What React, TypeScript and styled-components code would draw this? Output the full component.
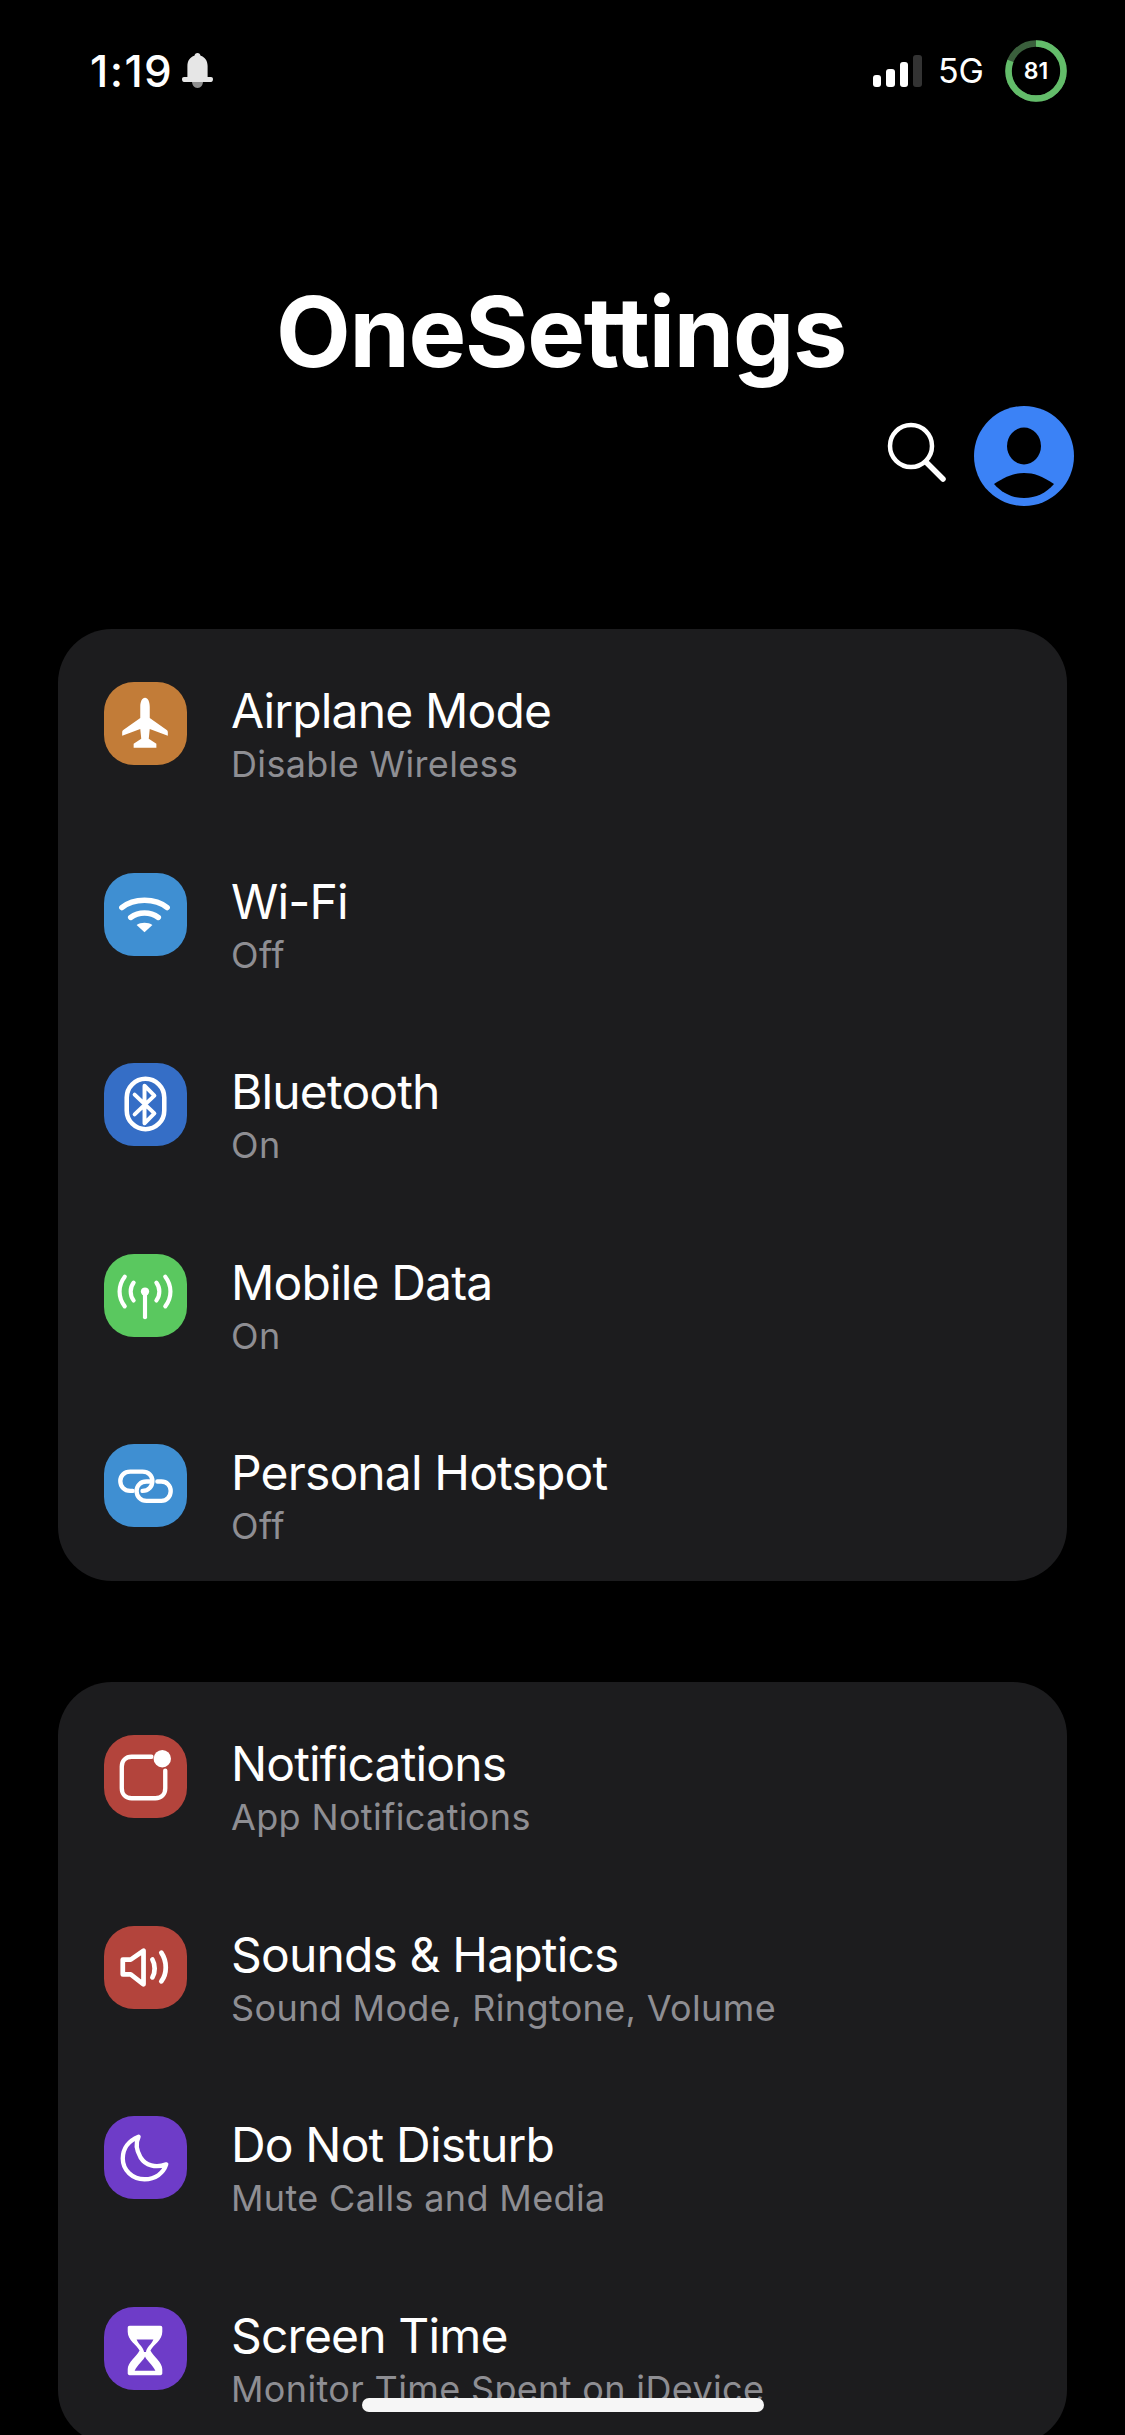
import { ReactNode } from 'react';
import styled, { createGlobalStyle } from 'styled-components';

const GlobalStyle = createGlobalStyle`
    html, body {
        margin: 0;
        padding: 0;
        background: #000;
        overflow: hidden;
    }
    * {
        box-sizing: border-box;
    }
`

type Item = {
    title: string;
    sub: string;
    color: string;
    icon: ReactNode;
}

const stroke = { fill: 'none', stroke: '#fff', strokeLinecap: 'round', strokeLinejoin: 'round' } as const;

const AirplaneIcon = () => (
    <svg viewBox="0 0 84 84">
        <path fill="#fff" d="M41.5 16C44.5 16 46.3 20 46.3 25V36.5L63.5 48.5C64.3 49.2 64.6 50 64.6 51V54.5L46.3 47.5L45.3 57.5L53 62.5V66.5H30V62.5L37.7 57.5L36.7 47.5L18.4 54.5V51C18.4 50 18.7 49.2 19.5 48.5L36.7 36.5V25C36.7 20 38.5 16 41.5 16Z" />
    </svg>
)

const WifiIcon = () => (
    <svg viewBox="0 0 84 84">
        <path {...stroke} strokeWidth="5.5" d="M18 35C30 25 52 25 64 35" />
        <path {...stroke} strokeWidth="5.5" d="M27 45C35 39 47 39 55 45" />
        <path fill="#fff" d="M33 52.5C37 49.5 45 49.5 49 52.5L41 60Z" />
    </svg>
)

const BluetoothIcon = () => (
    <svg viewBox="0 0 84 84">
        <rect {...stroke} strokeWidth="4.6" x="23" y="16" width="38" height="51" rx="19" />
        <path {...stroke} strokeWidth="4" d="M31 32L51 51L41 61V23L51 33L31 52" />
    </svg>
)

const AntennaIcon = () => (
    <svg viewBox="0 0 84 84">
        <circle fill="#fff" cx="41.5" cy="38" r="4.2" />
        <path {...stroke} strokeWidth="4.2" d="M41.5 38V64" />
        <path {...stroke} strokeWidth="4.2" d="M30 29C26 34 26 42 30 47" />
        <path {...stroke} strokeWidth="4.2" d="M53 29C57 34 57 42 53 47" />
        <path {...stroke} strokeWidth="4.2" d="M21 23C14 32 14 44 21 53" />
        <path {...stroke} strokeWidth="4.2" d="M62 23C69 32 69 44 62 53" />
    </svg>
)

const LinkIcon = () => (
    <svg viewBox="0 0 84 84">
        <path {...stroke} strokeWidth="4.4" d="M29 47.5H26.5C20.5 47.5 16.5 43 16.5 37.5C16.5 32 20.5 28 26.5 28H39C45 28 49 32 49 37.5C49 43 45 47.5 39 47.5" />
        <path {...stroke} strokeWidth="4.4" d="M54 38H58C63.5 38 67.5 42 67.5 47.5C67.5 53 63.5 57.5 58 57.5H43C37 57.5 33 53 33 47.5C33 42 37 38 43 38H46" />
    </svg>
)

const BadgeIcon = () => (
    <svg viewBox="0 0 84 84">
        <path {...stroke} strokeWidth="4.4" d="M48 22H28C22 22 18 26 18 32V54C18 60 22 64 28 64H52C58 64 62 60 62 54V36" />
        <circle fill="#fff" cx="59" cy="24" r="8.8" />
    </svg>
)

const SpeakerIcon = () => (
    <svg viewBox="0 0 84 84">
        <path {...stroke} strokeWidth="4.8" d="M19 34H27L40 25V59L27 49H19Z" />
        <path {...stroke} strokeWidth="4.8" d="M49 34C52 39 52 47 49 52" />
        <path {...stroke} strokeWidth="4.8" d="M58 27C64 36 64 48 58 56" />
    </svg>
)

const MoonIcon = () => (
    <svg viewBox="0 0 84 84">
        <path {...stroke} strokeWidth="4.4" d="M35 21C25 25 19 33 19 43C19 55 29 64 41 64C52 64 60 58 63 49C52 53 42 50 37 42C33 35 32 27 35 21Z" />
    </svg>
)

const HourglassIcon = () => (
    <svg viewBox="0 0 84 84">
        <path fill="#fff" fillRule="evenodd" d="M26 19H57C58.5 19 59 20 59 21V25C59 34 50 38 47 44C50 50 59 56 59 63V67C59 68 58.5 69 57 69H26C24.5 69 24 68 24 67V63C24 56 33 50 36 44C33 38 24 34 24 25V21C24 20 24.5 19 26 19ZM33 33C35 38 40 41 40.5 45.5H42.5C43 41 48 38 50 33ZM41.5 50C40 54 34 58 31 64.5H52C49 58 43 54 41.5 50Z" />
    </svg>
)

const primary: Item[] = [
    { title: 'Airplane Mode', sub: 'Disable Wireless', color: '#c27c38', icon: <AirplaneIcon /> },
    { title: 'Wi-Fi', sub: 'Off', color: '#3f8fd2', icon: <WifiIcon /> },
    { title: 'Bluetooth', sub: 'On', color: '#356ec6', icon: <BluetoothIcon /> },
    { title: 'Mobile Data', sub: 'On', color: '#5ac85f', icon: <AntennaIcon /> },
    { title: 'Personal Hotspot', sub: 'Off', color: '#3f8fd2', icon: <LinkIcon /> },
];

const secondary: Item[] = [
    { title: 'Notifications', sub: 'App Notifications', color: '#b3443c', icon: <BadgeIcon /> },
    { title: 'Sounds & Haptics', sub: 'Sound Mode, Ringtone, Volume', color: '#b3443c', icon: <SpeakerIcon /> },
    { title: 'Do Not Disturb', sub: 'Mute Calls and Media', color: '#6e3cc8', icon: <MoonIcon /> },
    { title: 'Screen Time', sub: 'Monitor Time Spent on iDevice', color: '#6e3cc8', icon: <HourglassIcon /> },
];

const Group = ({ items }: { items: Item[] }) => (
    <Card>
        {items.map((item) => (
            <Row key={item.title}>
                <IconTile $color={item.color}>{item.icon}</IconTile>
                <div>
                    <RowTitle>{item.title}</RowTitle>
                    <RowSub>{item.sub}</RowSub>
                </div>
            </Row>
        ))}
    </Card>
)

const App = () => {
    return (
        <Wrapper>
            <GlobalStyle />
            <StatusBar>
                <TimeGroup>
                    <Time>1:19</Time>
                    <svg width="31" height="35" viewBox="0 0 31 35">
                        <path fill="#8f8f8f" d="M10 28H21C21 32 19 35 15.5 35C12 35 10 32 10 28Z" />
                        <path fill="#e6e6e6" d="M15.5 0C17.2 0 18.3 1.2 18.6 2.8C23 4 25.6 8 25.6 13V24H29C30.2 24 31 24.8 31 26.2C31 27.6 30.2 29 29 29H2C0.8 29 0 27.6 0 26.2C0 24.8 0.8 24 2 24H5.4V13C5.4 8 8 4 12.4 2.8C12.7 1.2 13.8 0 15.5 0Z" />
                    </svg>
                </TimeGroup>
                <StatusRight>
                    <Signal>
                        <SignalBar $height={12} />
                        <SignalBar $height={18} />
                        <SignalBar $height={25} />
                        <SignalBar $height={32} $off />
                    </Signal>
                    <Network>5G</Network>
                    <Battery>
                        <svg width="62" height="62" viewBox="0 0 62 62">
                            <circle cx="31" cy="31" r="27.5" fill="none" stroke="#3a5f3c" strokeWidth="6.5" />
                            <circle cx="31" cy="31" r="27.5" fill="none" stroke="#63bc6a" strokeWidth="6.5" pathLength="100" strokeDasharray="81 19" transform="rotate(-90 31 31)" />
                        </svg>
                        <BatteryLevel>81</BatteryLevel>
                    </Battery>
                </StatusRight>
            </StatusBar>
            <Title>OneSettings</Title>
            <Actions>
                <SearchButton>
                    <svg width="60" height="60" viewBox="0 0 60 60">
                        <circle {...stroke} strokeWidth="4.5" cx="24" cy="24" r="21" />
                        <path {...stroke} strokeWidth="5.5" d="M39 40L56 57" />
                    </svg>
                </SearchButton>
                <svg width="100" height="100" viewBox="0 0 100 100">
                    <circle cx="50" cy="50" r="50" fill="#3b82f6" />
                    <ellipse cx="50" cy="40" rx="17" ry="18.5" fill="#000" />
                    <path fill="#000" d="M20 78C32 70 40 67 50 67C60 67 68 70 80 78C72 87 62 92 50 92C38 92 28 87 20 78Z" />
                </svg>
            </Actions>
            <Groups>
                <Group items={primary} />
                <Group items={secondary} />
            </Groups>
            <HomeBar />
        </Wrapper>
    )
}

const Wrapper = styled.main`
    position: relative;
    height: 2435px;
    overflow: hidden;
    background: #000;
    color: #fff;
    font-family: Inter, "Liberation Sans", sans-serif;
`

const StatusBar = styled.header`
    display: flex;
    align-items: center;
    justify-content: space-between;
    height: 63px;
    margin-top: 39px;
    padding: 0 58px 0 90px;
`

const TimeGroup = styled.div`
    display: flex;
    align-items: center;
    gap: 9px;
`

const Time = styled.span`
    font-size: 44px;
    font-weight: 500;
    line-height: 1;
    letter-spacing: 1.4px;
`

const StatusRight = styled.div`
    display: flex;
    align-items: center;
`

const Signal = styled.div`
    display: flex;
    align-items: flex-end;
    gap: 5px;
    height: 32px;
    margin-right: 16px;
`

const SignalBar = styled.span<{ $height: number; $off?: boolean }>`
    width: 8.5px;
    height: ${(p) => p.$height}px;
    border-radius: 3px;
    background: ${(p) => (p.$off ? '#333' : '#fff')};
`

const Network = styled.span`
    font-size: 34px;
    line-height: 1;
    margin-right: 21px;
`

const Battery = styled.div`
    position: relative;
    width: 62px;
    height: 62px;

    svg {
        display: block;
    }
`

const BatteryLevel = styled.span`
    position: absolute;
    inset: 0;
    display: flex;
    align-items: center;
    justify-content: center;
    font-size: 23px;
    font-weight: 600;
`

const Title = styled.h1`
    margin: 175px 0 0;
    padding-right: 3px;
    font-size: 97px;
    font-weight: 700;
    line-height: 110px;
    letter-spacing: -1.3px;
    text-align: center;
`

const Actions = styled.div`
    display: flex;
    justify-content: flex-end;
    align-items: flex-start;
    gap: 27px;
    margin-top: 19px;
    padding-right: 51px;

    svg {
        display: block;
    }
`

const SearchButton = styled.div`
    margin-top: 16px;
`

const Groups = styled.div`
    display: flex;
    flex-direction: column;
    gap: 101px;
    margin: 123px 58px 0;
`

const Card = styled.section`
    display: flex;
    flex-direction: column;
    gap: 82.5px;
    padding: 53px 46px 29px;
    border-radius: 54px;
    background: #1c1c1e;
`

const Row = styled.div`
    display: flex;
    align-items: flex-start;
    gap: 44px;
`

const IconTile = styled.div<{ $color: string }>`
    flex: none;
    width: 83px;
    height: 83px;
    border-radius: 30px;
    background: ${(p) => p.$color};

    svg {
        display: block;
        width: 83px;
        height: 83px;
    }
`

const RowTitle = styled.div`
    font-size: 48px;
    line-height: 57px;
    letter-spacing: -0.85px;
`

const RowSub = styled.div`
    font-size: 36px;
    line-height: 51px;
    letter-spacing: 0.35px;
    color: #8e8e93;
`

const HomeBar = styled.div`
    position: absolute;
    left: 362px;
    bottom: 23px;
    width: 402px;
    height: 14px;
    border-radius: 7px;
    background: #f6f6f6;
`

export default App
